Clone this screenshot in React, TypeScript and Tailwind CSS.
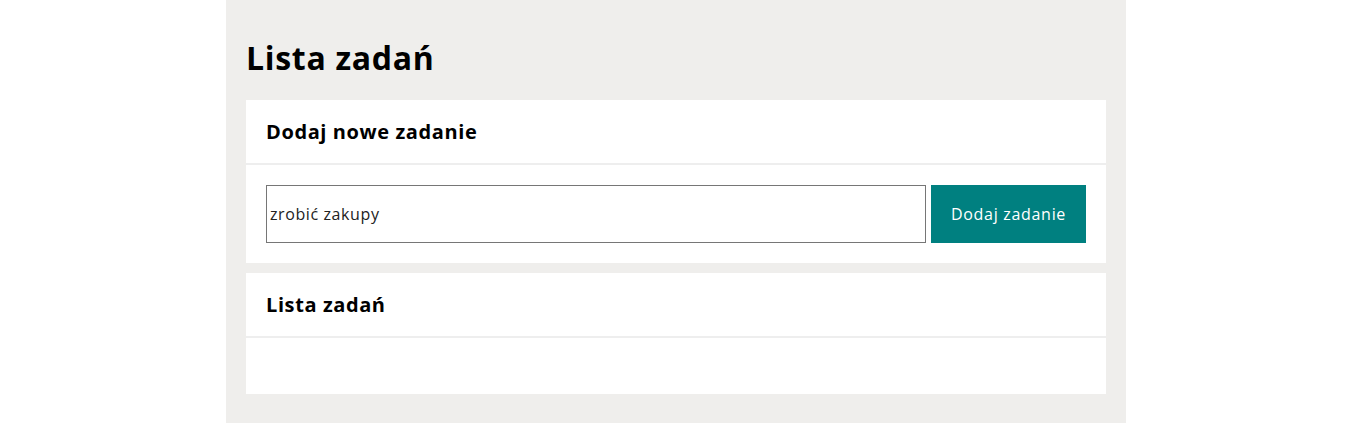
import React, { useState } from 'react';

const App: React.FC = () => {
  const [task, setTask] = useState('zrobić zakupy');

  return (
    <div className="min-h-screen bg-white font-['Open_Sans',sans-serif] text-black">
      <div className="ml-[226px] w-[900px] bg-[#efeeec] px-5 pt-[37px] pb-[29px]">
        <h1 className="mb-[22px] text-[32px] leading-[41px] font-bold tracking-[0.7px]">Lista zadań</h1>

        {/* Dodawanie */}
        <section className="bg-white">
          <h2 className="border-b-2 border-[#eeeeee] px-5 py-5 text-[20px] leading-[23px] font-bold tracking-[0.6px]">Dodaj nowe zadanie</h2>
          <div className="flex gap-[5px] p-5">
            <input
              value={task}
              onChange={(e) => setTask(e.target.value)}
              className="h-[58px] flex-1 border border-[#767676] px-[3px] text-[16px] tracking-[0.6px] text-[#222] outline-none"
            />
            <button className="h-[58px] w-[155px] bg-[#008080] text-[16px] tracking-[0.7px] text-white">Dodaj zadanie</button>
          </div>
        </section>

        {/* Lista */}
        <section className="mt-[10px] bg-white">
          <h2 className="border-b-2 border-[#eeeeee] px-5 py-5 text-[20px] leading-[23px] font-bold tracking-[0.6px]">Lista zadań</h2>
          <ul className="h-[56px]"></ul>
        </section>
      </div>
    </div>
  );
};

export default App;
